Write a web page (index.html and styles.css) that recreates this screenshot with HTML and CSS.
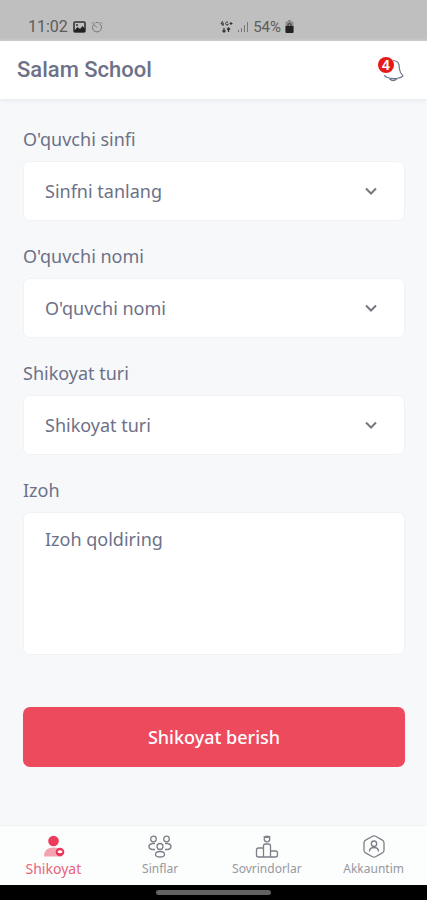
FILE: index.html
```html
<!DOCTYPE html>
<html lang="uz">
<head>
<meta charset="utf-8">
<meta name="viewport" content="width=device-width, initial-scale=1">
<title>Salam School</title>
<link rel="stylesheet" href="styles.css">
</head>
<body>
<div class="app">
  <div class="status">
    <div class="status-group status-left">
      <span>11:02</span>
      <svg width="13" height="12" viewBox="0 0 13 12"><rect x="1" y="1" width="11" height="10" rx="1" fill="none" stroke="#333" stroke-width="1.6"/><path d="M1 10 4.5 6 7 8 9.500 5 12 8v3H1z" fill="#222"/><circle cx="4" cy="4" r="1" fill="#333"/></svg>
      <svg width="12" height="12" viewBox="0 0 12 12" fill="none" stroke="#777"><path d="M4 2.400A4.500 4.500 0 1 0 8 2.400M6 6.500 3.500 4M1 2.500 2.500 1M9.500 1 11 2.500M4.500 1.500h3"/></svg>
    </div>
    <div class="status-group status-right">
      <svg width="13" height="13" viewBox="0 0 13 13" fill="none" stroke="#333"><path d="M2.500 1 1 4h3M3 2.500V6M8 2H6.500L5.500 3.500 6.500 5H8V3.700M9.500 3.500h3M11 2v3"/><path d="M4 8v4M2.500 10.500 4 12l1.500-1.500M8.500 12V8M7 9.500 8.500 8 10 9.500" stroke-width="1.300"/></svg>
      <svg class="signal" width="12" height="12" viewBox="0 0 12 12" stroke="#777" fill="none"><path d="M1.500 11V9M4.500 11V7M7.500 11V4M10.500 11V1"/></svg>
      <span>54%</span>
      <svg width="9" height="13" viewBox="0 0 9 13"><path d="M3 0h3v1.500h1.500Q8.500 1.500 8.500 3v9q0 1-1 1h-6q-1 0-1-1V3Q.5 1.500 1.500 1.500H3z" fill="#8b8b8b"/><path d="M.5 6h8v6q0 1-1 1h-6q-1 0-1-1z" fill="#222"/><path d="M3 6V5q0-1.500 1.500-1.500T6 5v1" fill="none" stroke="#333"/></svg>
    </div>
  </div>
  <header class="header">
    <h1>Salam School</h1>
    <button class="bell" type="button" aria-label="Bildirishnomalar">
      <svg width="26" height="26" viewBox="0 0 26 26" fill="none" stroke="#70778a" stroke-width="1.200" stroke-linejoin="round"><path d="M14 3.500q5 .2 6 4.500.3 5 1.500 7.500l2.500 3.500q-2 2-6.500 2.500-5 .5-9-1-3-1-2.800-2.500"/><path d="M10.500 21.500q3.500 4 7.500 0" stroke-width="1.600"/></svg>
      <span class="badge">4</span>
    </button>
  </header>
  <form class="form">
    <div class="field">
      <label for="class">O'quvchi sinfi</label>
      <div class="select-wrap">
        <select id="class"><option>Sinfni tanlang</option></select>
        <svg class="chevron" width="14" height="8" viewBox="0 0 14 8"><path d="M2 1.500 7 6.500 12 1.500"/></svg>
      </div>
    </div>
    <div class="field">
      <label for="student">O'quvchi nomi</label>
      <div class="select-wrap">
        <select id="student"><option>O'quvchi nomi</option></select>
        <svg class="chevron" width="14" height="8" viewBox="0 0 14 8"><path d="M2 1.500 7 6.500 12 1.500"/></svg>
      </div>
    </div>
    <div class="field">
      <label for="type">Shikoyat turi</label>
      <div class="select-wrap">
        <select id="type"><option>Shikoyat turi</option></select>
        <svg class="chevron" width="14" height="8" viewBox="0 0 14 8"><path d="M2 1.500 7 6.500 12 1.500"/></svg>
      </div>
    </div>
    <div class="field">
      <label for="note">Izoh</label>
      <textarea id="note" placeholder="Izoh qoldiring"></textarea>
    </div>
    <button class="submit" type="submit">Shikoyat berish</button>
  </form>
  <nav class="nav">
    <a class="active" href="#shikoyat">
      <svg width="24" height="24" viewBox="0 0 24 24"><circle cx="12.500" cy="6" r="5.300" fill="#ec3b5b"/><path d="M3 21.500q0-9 9.500-9 6 0 8 4v5z" fill="#f4a3b0"/><circle cx="19" cy="17" r="4.300" fill="#e93558"/><path d="M16.800 16q2.200-1.500 4.400 0v1.500q-2.200 1.500-4.400 0z" fill="#fff"/></svg>
      <span>Shikoyat</span>
    </a>
    <a href="#sinflar">
      <svg class="line" width="24" height="24" viewBox="0 0 24 24"><circle cx="5.500" cy="4" r="2.800"/><circle cx="18.500" cy="4" r="2.800"/><circle cx="12" cy="11.500" r="3"/><path d="M7 8.500H4.500Q1 9 1 11.500 1 14 4 14.500h3M17 8.500h2.500q3.500.5 3.500 3 0 2.500-3 3h-3M7.500 19.500q0-3 4.500-3t4.500 3q0 2.500-4.500 2.500t-4.500-2.500z"/></svg>
      <span>Sinflar</span>
    </a>
    <a href="#sovrindorlar">
      <svg class="line" width="24" height="24" viewBox="0 0 24 24"><circle cx="12" cy="4" r="2.800"/><path d="M8.500 1.500 12 2.500l3.500-1M8.500 22V11q0-2 2-2h3q2 0 2 2v11M8.500 13h-5q-2 0-2 2v5q0 2 2 2h17q2 0 2-2v-2q0-2-2-2h-5"/></svg>
      <span>Sovrindorlar</span>
    </a>
    <a href="#akkauntim">
      <svg class="line" width="24" height="24" viewBox="0 0 24 24"><path d="M10.500 1.200q1.500-.8 3 0l6.500 3.600q2 1 2 3v7.400q0 2-2 3l-6.500 3.600q-1.500.8-3 0L4 18.200q-2-1-2-3V7.800q0-2 2-3z"/><circle cx="12" cy="8.700" r="2.700"/><path d="M7.500 16.500q0-4 4.500-4t4.500 4"/></svg>
      <span>Akkauntim</span>
    </a>
  </nav>
  <div class="system"><div class="handle"></div></div>
</div>
</body>
</html>
```
FILE: styles.css
```css
* { box-sizing: border-box; }

body {
  margin: 0;
  background: #f6f8fa;
  color: #6d7187;
  font-family: "Noto Sans", sans-serif;
}

button, select, textarea { font: inherit; color: inherit; }
svg { display: block; flex: none; }

.app {
  min-height: 100vh;
  display: flex;
  flex-direction: column;
}

.status {
  display: flex;
  justify-content: space-between;
  height: 41px;
  padding: 12px 133px 0 28px;
  background: #bfbfbf;
  color: #5c5c5c;
  font: 16px/28px Roboto, sans-serif;
}

.status-group { display: flex; align-items: center; }
.status-left { gap: 5px; }
.status-right { gap: 4px; font-size: 15px; }

.header {
  display: flex;
  align-items: center;
  justify-content: space-between;
  height: 58px;
  padding: 0 22px 0 17px;
  background: #fff;
  box-shadow: 0 1px 5px #e3e6ea;
}

h1 {
  margin: 0;
  font: 500 22px/28px Roboto, sans-serif;
}

.bell {
  position: relative;
  padding: 0;
  border: 0;
  background: none;
}

.badge {
  position: absolute;
  top: 0;
  left: -1px;
  width: 16px;
  height: 16px;
  border-radius: 50%;
  background: #e61919;
  color: #fff;
  font: 700 14px/16px "Liberation Sans", sans-serif;
  text-align: center;
}

.form {
  flex: 1;
  display: flex;
  flex-direction: column;
  gap: 23px;
  padding: 28px 22px 24px 23px;
  font-size: 18px;
  line-height: 24px;
}

.field {
  display: flex;
  flex-direction: column;
  gap: 10px;
}

.select-wrap { display: grid; align-items: center; }
.select-wrap > * { grid-area: 1 / 1; }

select, textarea {
  width: 100%;
  border: 1px solid #f0f2f5;
  border-radius: 7px;
  background: #fff;
  outline: 0;
}

select {
  height: 60px;
  padding: 0 21px;
  appearance: none;
}

.chevron {
  justify-self: end;
  margin-right: 27px;
  fill: none;
  stroke: #73777e;
  stroke-width: 2;
  pointer-events: none;
}

textarea {
  display: block;
  height: 143px;
  padding: 14px 21px;
  resize: none;
}

textarea::placeholder { color: inherit; opacity: 1; }

.submit {
  height: 60px;
  margin-top: 29px;
  border: 0;
  border-radius: 7px;
  background: #ed4a5e;
  color: #fff;
  font-weight: 500;
}

.nav {
  display: grid;
  grid-template-columns: repeat(4, 1fr);
  height: 60px;
  padding-top: 9px;
  background: #fcfdfd;
  border-top: 1px solid #f1f3f5;
  font-size: 12px;
  line-height: 20px;
}

.nav a {
  display: flex;
  flex-direction: column;
  align-items: center;
  color: #96999e;
  text-decoration: none;
}

.nav .active { color: #e8637a; font-size: 14px; }

.line {
  fill: none;
  stroke: #7c7f87;
  stroke-width: 1.3;
}

.system {
  display: flex;
  justify-content: center;
  height: 15px;
  padding-top: 5px;
  background: #000;
}

.handle {
  width: 27%;
  height: 5px;
  border-radius: 3px;
  background: #626262;
}
```
